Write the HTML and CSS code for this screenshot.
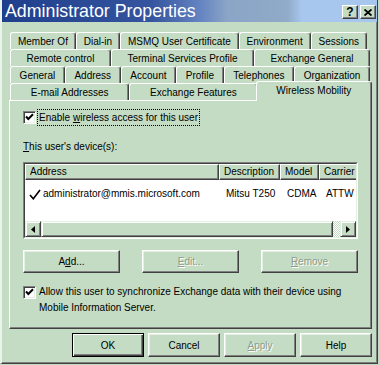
FILE: index.html
```html
<!DOCTYPE html>
<html lang="en">
<head>
  <meta charset="UTF-8">
  <title>Administrator Properties</title>
  <link rel="stylesheet" href="styles.css">
</head>
<body>
  <div class="window">
    <div class="titlebar">
      <span class="title">Administrator Properties</span>
      <div class="caption-buttons">
        <span class="caption-btn">?</span>
        <span class="caption-btn">
          <svg width="8" height="7" viewBox="0 0 8 7"><path d="M0.5 0.5 L7.5 6.5 M7.5 0.5 L0.5 6.5" stroke="#000" stroke-width="1.8"/></svg>
        </span>
      </div>
    </div>

    <div class="content">
      <div class="tabs">
        <div class="tab-row first">
          <span class="tab">Member Of</span>
          <span class="tab">Dial-in</span>
          <span class="tab">MSMQ User Certificate</span>
          <span class="tab">Environment</span>
          <span class="tab">Sessions</span>
        </div>
        <div class="tab-row">
          <span class="tab">Remote control</span>
          <span class="tab">Terminal Services Profile</span>
          <span class="tab">Exchange General</span>
        </div>
        <div class="tab-row">
          <span class="tab">General</span>
          <span class="tab">Address</span>
          <span class="tab">Account</span>
          <span class="tab">Profile</span>
          <span class="tab">Telephones</span>
          <span class="tab">Organization</span>
        </div>
        <div class="tab-row">
          <span class="tab">E-mail Addresses</span>
          <span class="tab">Exchange Features</span>
          <span class="tab active">Wireless Mobility</span>
        </div>
      </div>

      <div class="panel">
        <div class="check-row">
          <span class="checkbox">
            <svg width="11" height="11" viewBox="0 0 11 11"><path d="M2 4.5 L4.3 7 L9 2.3" stroke="#000" stroke-width="2" fill="none"/></svg>
          </span>
          <span class="focus-label">Enable <u>w</u>ireless access for this user</span>
        </div>

        <div class="devices-label"><u>T</u>his user's device(s):</div>

        <div class="list">
          <div class="list-inner">
            <div class="list-header">
              <span class="col col-address">Address</span>
              <span class="col col-desc">Description</span>
              <span class="col col-model">Model</span>
              <span class="col col-carrier">Carrier</span>
            </div>
            <div class="list-rows">
              <div class="list-row">
                <span class="col col-address">
                  <svg class="tick" width="12" height="11" viewBox="0 0 12 11"><path d="M1 6 L4.3 9.8 L11 1" stroke="#000" stroke-width="1.6" fill="none"/></svg>administrator@mmis.microsoft.com
                </span>
                <span class="col col-desc">Mitsu T250</span>
                <span class="col col-model">CDMA</span>
                <span class="col col-carrier">ATTW</span>
              </div>
            </div>
            <div class="hscroll">
              <span class="sb-btn"><svg width="4" height="7" viewBox="0 0 4 7"><polygon points="4,0 0,3.5 4,7" fill="#000"/></svg></span>
              <span class="sb-thumb"></span>
              <span class="sb-track"></span>
              <span class="sb-btn"><svg width="4" height="7" viewBox="0 0 4 7"><polygon points="0,0 4,3.5 0,7" fill="#000"/></svg></span>
            </div>
          </div>
        </div>

        <div class="list-buttons">
          <button class="btn">A<u>d</u>d...</button>
          <button class="btn" disabled><u>E</u>dit...</button>
          <button class="btn" disabled><u>R</u>emove</button>
        </div>

        <div class="sync-row">
          <span class="checkbox">
            <svg width="11" height="11" viewBox="0 0 11 11"><path d="M2 4.5 L4.3 7 L9 2.3" stroke="#000" stroke-width="2" fill="none"/></svg>
          </span>
          <span class="sync-text">Allow this user to synchronize Exchange data with their device using<br>Mobile Information Server.</span>
        </div>
      </div>

      <div class="actions">
        <button class="btn wide default">OK</button>
        <button class="btn wide">Cancel</button>
        <button class="btn wide" disabled><u>A</u>pply</button>
        <button class="btn wide">Help</button>
      </div>
    </div>
  </div>
</body>
</html>
```

FILE: styles.css
```css
body {
  margin: 0;
  background: #c4dcc4;
  font-family: "Liberation Sans", Arial, sans-serif;
  font-size: 10px;
  color: #000;
}
.window {
  width: 378px;
  height: 364px;
  box-sizing: border-box;
  border-left: 2px solid #eaf4ea;
  border-right: 1px solid #404040;
  border-bottom: 1px solid #404040;
  box-shadow: inset -1px -1px #808080;
}
.titlebar {
  height: 22px;
  display: flex;
  align-items: center;
  padding: 0 1px 0 3px;
  background: linear-gradient(to right, #1f3e8c 0%, #35559f 40%, #6584c2 53%, #8aa5c6 60%, #90aac8 76%, #a7c7ee 80%, #a7c7ee 100%);
}
.title {
  color: #fff;
  font-size: 17.8px;
  line-height: 22px;
  white-space: nowrap;
}
.caption-buttons {
  margin-left: auto;
  padding-top: 2px;
  display: flex;
  gap: 2px;
}
.caption-btn {
  width: 16px;
  height: 14px;
  box-sizing: border-box;
  border: 1px solid;
  border-color: #fff #404040 #404040 #fff;
  box-shadow: inset -1px -1px #808080;
  background: #c4dcc4;
  display: flex;
  align-items: center;
  justify-content: center;
  font-size: 12px;
  font-weight: bold;
  line-height: 12px;
}

.content {
  padding-left: 7px;
}

/* onglets */
.tabs {
  margin: 10px 0 0 1px;
  width: 360px;
}
.tab-row {
  display: flex;
  height: 17px;
}
.tab-row.first {
  width: 357px;
}
.tab {
  flex: 1 1 auto;
  box-sizing: border-box;
  height: 17px;
  padding: 2px 3px 0;
  line-height: 13px;
  text-align: center;
  white-space: nowrap;
  border: 1px solid #fff;
  border-bottom: 0;
  border-right-color: #404040;
  box-shadow: inset -1px 0 #808080;
  border-radius: 3px 3px 0 0;
  background: #c4dcc4;
}
.tab.active {
  position: relative;
  z-index: 1;
  height: 20px;
  margin: -2px -2px 0 -2px;
}

/* page */
.panel {
  width: 363px;
  height: 229px;
  box-sizing: border-box;
  border: 1px solid;
  border-color: #fff #404040 #404040 #fff;
  box-shadow: inset -1px -1px #808080;
  padding: 8px 0 0 13px;
}
.check-row {
  display: flex;
  align-items: center;
}
.checkbox {
  flex: none;
  width: 13px;
  height: 13px;
  box-sizing: border-box;
  border: 1px solid;
  border-color: #808080 #fff #fff #808080;
  box-shadow: inset 1px 1px #404040, inset -1px -1px #e4f0e4;
  background: #fff;
  display: flex;
}
.focus-label {
  margin-left: 1px;
  padding: 1px;
  border: 1px dotted #000;
  line-height: 13px;
}
.devices-label {
  margin-top: 14px;
  line-height: 13px;
}

/* liste */
.list {
  margin-top: 9px;
  width: 335px;
  height: 77px;
  box-sizing: border-box;
  border: 1px solid;
  border-color: #808080 #fff #fff #808080;
}
.list-inner {
  height: 100%;
  box-sizing: border-box;
  border: 1px solid;
  border-color: #404040 #e4f0e4 #e4f0e4 #404040;
  background: #fff;
  display: flex;
  flex-direction: column;
  overflow: hidden;
}
.list-header {
  display: flex;
  height: 16px;
  flex: none;
  overflow: hidden;
}
.col {
  flex: none;
  box-sizing: border-box;
  padding-left: 7px;
  white-space: nowrap;
  overflow: hidden;
}
.list-header .col {
  height: 16px;
  line-height: 14px;
  padding-left: 4px;
  border: 1px solid;
  border-color: #fff #404040 #404040 #fff;
  box-shadow: inset -1px -1px #808080;
  background: #c4dcc4;
}
.col-address { width: 194px; }
.col-desc { width: 61px; }
.col-model { width: 39px; }
.col-carrier { width: 45px; }
.list-rows {
  flex: 1;
  padding-top: 6px;
}
.list-row {
  display: flex;
  height: 16px;
  line-height: 16px;
}
.list-row .col-address {
  padding-left: 4px;
  display: flex;
  align-items: center;
}
.tick {
  margin-right: 2px;
  flex: none;
}
.hscroll {
  display: flex;
  height: 16px;
  flex: none;
}
.sb-btn, .sb-thumb {
  box-sizing: border-box;
  border: 1px solid;
  border-color: #e4f0e4 #404040 #404040 #e4f0e4;
  box-shadow: inset 1px 1px #fff, inset -1px -1px #808080;
  background: #c4dcc4;
}
.sb-btn {
  width: 16px;
  display: flex;
  align-items: center;
  justify-content: center;
}
.sb-thumb {
  flex: 1;
}
.sb-track {
  width: 7px;
  background: repeating-conic-gradient(#fff 0 25%, #c4dcc4 0 50%) 0 0 / 2px 2px;
}

/* boutons */
.list-buttons {
  margin-top: 11px;
  display: grid;
  grid-template-columns: repeat(3, 97px);
  column-gap: 22px;
}
.btn {
  height: 23px;
  box-sizing: border-box;
  padding: 0;
  border: 1px solid;
  border-color: #fff #404040 #404040 #fff;
  box-shadow: inset -1px -1px #808080, inset 1px 1px #e4f0e4;
  background: #c4dcc4;
  font-family: inherit;
  font-size: 10px;
  color: #000;
}
.btn:disabled {
  color: #8c9c8c;
  text-shadow: 1px 1px #fff;
}
.btn.wide {
  width: 72px;
  height: 24px;
}
.btn.default {
  border-color: #000;
  box-shadow: inset 1px 1px #fff, inset -1px -1px #404040, inset -2px -2px #808080;
}
.sync-row {
  margin-top: 11px;
  display: flex;
  align-items: flex-start;
}
.sync-row .checkbox {
  margin-top: 2px;
}
.sync-text {
  margin-left: 3px;
  line-height: 16px;
}
.actions {
  width: 363px;
  margin-top: 4px;
  display: flex;
  justify-content: flex-end;
  gap: 4px;
}
```
